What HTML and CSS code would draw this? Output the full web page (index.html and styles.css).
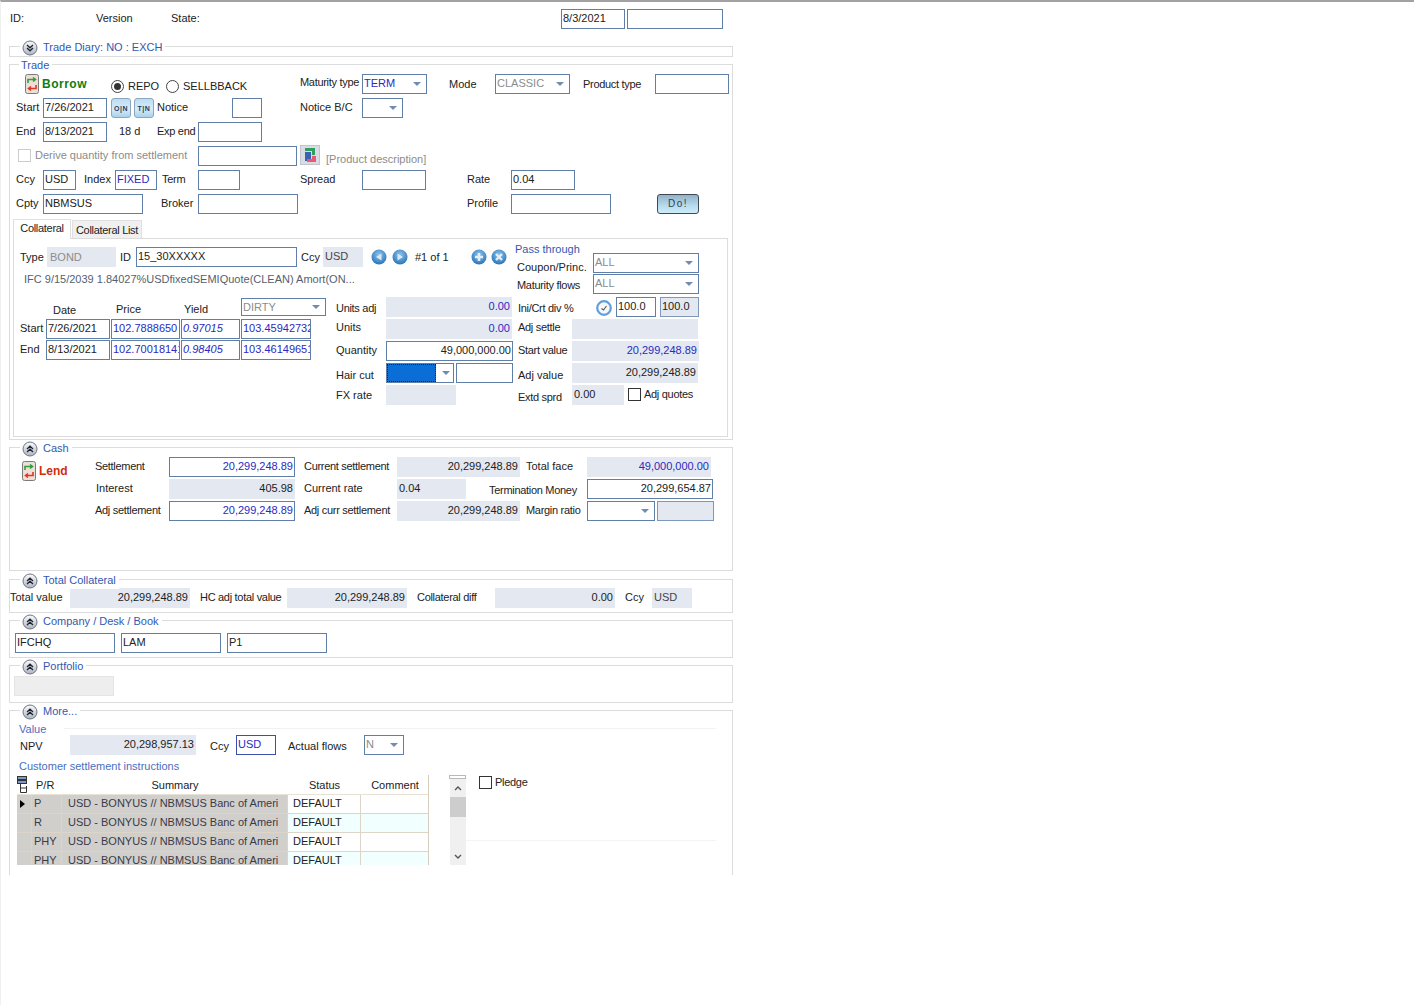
FILE: index.html
```html
<!DOCTYPE html>
<html lang="en">
<head>
    <meta charset="UTF-8">
    <title>Repo Trade</title>
    <link rel="stylesheet" href="styles.css">
</head>
<body>
    <svg class="defs" aria-hidden="true">
        <defs>
            <linearGradient id="chevFill" x1="0" y1="0" x2="0" y2="1">
                <stop offset="0" stop-color="#fbfbfd"/>
                <stop offset="1" stop-color="#aeb4c0"/>
            </linearGradient>
            <radialGradient id="navFill" cx="50%" cy="35%" r="70%">
                <stop offset="0" stop-color="#8fc4ea"/>
                <stop offset="1" stop-color="#1f6fb6"/>
            </radialGradient>
            <symbol id="chevUp" viewBox="0 0 16 16">
                <circle cx="8" cy="8" r="7" fill="url(#chevFill)" stroke="#6d7684"/>
                <path d="M5 8 8 5.2 11 8M5 11 8 8.2 11 11" fill="none" stroke="#1f2430" stroke-width="1.3"/>
            </symbol>
            <symbol id="chevDown" viewBox="0 0 16 16">
                <circle cx="8" cy="8" r="7" fill="url(#chevFill)" stroke="#6d7684"/>
                <path d="M5 5 8 7.8 11 5M5 8 8 10.8 11 8" fill="none" stroke="#1f2430" stroke-width="1.3"/>
            </symbol>
            <symbol id="swap" viewBox="0 0 14 20">
                <rect x=".5" y=".5" width="13" height="19" rx="2" fill="#e3e1dc" stroke="#7b7b7b"/>
                <rect x="2" y="2" width="10" height="16" rx="1" fill="#f4dcd6"/>
                <path d="M3 9V5.5H10M8 3.5 10.5 5.5 8 7.5" fill="none" stroke="#2f9e3f" stroke-width="1.6"/>
                <path d="M11 11V14.5H4M6 12.5 3.5 14.5 6 16.5" fill="none" stroke="#d93a22" stroke-width="1.6"/>
            </symbol>
            <symbol id="navPrev" viewBox="0 0 16 16">
                <circle cx="8" cy="8" r="7.5" fill="url(#navFill)"/>
                <path d="M10.5 4.5V11.5L5 8Z" fill="#dbe7f2"/>
            </symbol>
            <symbol id="navNext" viewBox="0 0 16 16">
                <circle cx="8" cy="8" r="7.5" fill="url(#navFill)"/>
                <path d="M5.5 4.5V11.5L11 8Z" fill="#dbe7f2"/>
            </symbol>
            <symbol id="navAdd" viewBox="0 0 16 16">
                <circle cx="8" cy="8" r="7.5" fill="url(#navFill)"/>
                <path d="M8 4V12M4 8H12" stroke="#e6eef6" stroke-width="2.6"/>
            </symbol>
            <symbol id="navDel" viewBox="0 0 16 16">
                <circle cx="8" cy="8" r="7.5" fill="url(#navFill)"/>
                <path d="M5 5 11 11M11 5 5 11" stroke="#e6eef6" stroke-width="2.4"/>
            </symbol>
            <symbol id="clock" viewBox="0 0 16 16">
                <circle cx="8" cy="8" r="6.8" fill="#f6f8fb" stroke="#5f9fdc" stroke-width="2.2"/>
                <path d="M5.5 8.5 7.5 10 10.5 6" fill="none" stroke="#555" stroke-width="1.1"/>
            </symbol>
            <symbol id="product" viewBox="0 0 20 20">
                <rect x=".5" y=".5" width="19" height="19" fill="#d9dce3" stroke="#c2c5cc"/>
                <path d="M5 3H15V10H12V6H5Z" fill="#2f9e5f"/>
                <rect x="5" y="7" width="6" height="9" fill="#3a62b0"/>
                <path d="M12 11H16V17H7V14H12Z" fill="#ec5a72"/>
            </symbol>
            <symbol id="columns" viewBox="0 0 10 17">
                <rect x=".5" y=".5" width="9" height="3" fill="#7d9bc8" stroke="#333"/>
                <rect x=".5" y="4.5" width="9" height="3" fill="#7d9bc8" stroke="#333"/>
                <path d="M3.5 8V16.5H9.5M3.5 12H9.5M9.5 10V16.5" fill="none" stroke="#333"/>
            </symbol>
        </defs>
    </svg>

    <div class="page">
        <div class="row r-head">
            <span class="lbl ml1 w86">ID:</span>
            <span class="lbl w75">Version</span>
            <span class="lbl w390">State:</span>
            <span class="box w64">8/3/2021</span>
            <span class="box ml2 w96"></span>
        </div>

        <section class="frame f-diary">
            <div class="legend"><svg class="chev"><use href="#chevDown"/></svg><span>Trade Diary: NO : EXCH</span></div>
        </section>

        <section class="frame f-trade">
            <div class="legend legend-plain"><span>Trade</span></div>
            <div class="row">
                <svg class="swap ml15"><use href="#swap"/></svg>
                <span class="lbl ml3 w69 mt1 borrow">Borrow</span>
                <span class="radio on mt6"></span>
                <span class="lbl ml4 w38 mt3">REPO</span>
                <span class="radio mt6"></span>
                <span class="lbl ml4 w117 mt3">SELLBBACK</span>
                <span class="lbl tight w62 mtn1">Maturity type</span>
                <span class="box sel w65 blue">TERM</span>
                <span class="lbl ml22 w46 mt1">Mode</span>
                <span class="box sel w75 muted">CLASSIC</span>
                <span class="lbl tight ml13 w72 mt1">Product type</span>
                <span class="box w74"></span>
            </div>
            <div class="row">
                <span class="lbl ml6 w27">Start</span>
                <span class="box w64">7/26/2021</span>
                <span class="tbtn ml4">O|N</span>
                <span class="tbtn ml3">T|N</span>
                <span class="lbl ml3 w75">Notice</span>
                <span class="box w30"></span>
                <span class="lbl ml38 w62">Notice B/C</span>
                <span class="box sel w41"></span>
            </div>
            <div class="row">
                <span class="lbl ml6 w27">End</span>
                <span class="box w64">8/13/2021</span>
                <span class="lbl ml12 w38">18 d</span>
                <span class="lbl tight w41">Exp end</span>
                <span class="box w64"></span>
            </div>
            <div class="row">
                <span class="check off ml8 mt3"></span>
                <span class="lbl muted ml4 w163">Derive quantity from settlement</span>
                <span class="box w99"></span>
                <svg class="prod ml3 mtn1"><use href="#product"/></svg>
                <span class="lbl muted ml6 mt4">[Product description]</span>
            </div>
            <div class="row">
                <span class="lbl ml6 w27">Ccy</span>
                <span class="box w33">USD</span>
                <span class="lbl ml8 w31">Index</span>
                <span class="box w42 blue">FIXED</span>
                <span class="lbl tight ml5 w36">Term</span>
                <span class="box w42"></span>
                <span class="lbl ml60 w62">Spread</span>
                <span class="box w64"></span>
                <span class="lbl ml41 w44">Rate</span>
                <span class="box w64">0.04</span>
            </div>
            <div class="row">
                <span class="lbl ml6 w27">Cpty</span>
                <span class="box w100">NBMSUS</span>
                <span class="lbl ml18 w37">Broker</span>
                <span class="box w100"></span>
                <span class="lbl ml169 w44">Profile</span>
                <span class="box w100"></span>
                <span class="do-btn ml46">Do!</span>
            </div>

            <div class="tabs">
                <span class="tab tab-on">Collateral</span>
                <span class="tab">Collateral List</span>
            </div>
            <div class="panel">
                <div class="panel-top">
                    <div class="panel-main">
                        <div class="row r22">
                            <span class="lbl ml6 w27 mt1">Type</span>
                            <span class="box ro box-low w69 muted">BOND</span>
                            <span class="lbl ml4 w16 mt1">ID</span>
                            <span class="box w161">15_30XXXXX</span>
                            <span class="lbl ml4 w22 mt1">Ccy</span>
                            <span class="box ro w40 dim">USD</span>
                            <svg class="nav ml8 mt2"><use href="#navPrev"/></svg>
                            <svg class="nav ml5 mt2"><use href="#navNext"/></svg>
                            <span class="lbl ml7 w56 mt1">#1 of 1</span>
                            <svg class="nav mt2"><use href="#navAdd"/></svg>
                            <svg class="nav ml4 mt2"><use href="#navDel"/></svg>
                        </div>
                        <div class="desc">IFC 9/15/2039 1.84027%USDfixedSEMIQuote(CLEAN) Amort(ON...</div>
                    </div>
                    <div class="pass">
                        <div class="pass-title">Pass through</div>
                        <div class="row r21">
                            <span class="lbl ml2 w76 mt5">Coupon/Princ.</span>
                            <span class="box sel w106 muted">ALL</span>
                        </div>
                        <div class="row r21">
                            <span class="lbl tight ml2 w76 mt2">Maturity flows</span>
                            <span class="box sel w106 muted">ALL</span>
                        </div>
                    </div>
                </div>
                <div class="panel-bottom">
                    <div class="quotes">
                        <div class="row r-quote-head">
                            <span class="lbl ml39 w63 mt3">Date</span>
                            <span class="lbl w68 mt2">Price</span>
                            <span class="lbl w57 mt2">Yield</span>
                            <span class="box sel w85 h18 muted">DIRTY</span>
                        </div>
                        <div class="row r21">
                            <span class="lbl ml6 w26">Start</span>
                            <span class="box w64">7/26/2021</span>
                            <span class="box ml1 w69 blue">102.7888650</span>
                            <span class="box ml1 w59 blue ital">0.97015</span>
                            <span class="box ml1 w70 blue">103.45942732</span>
                        </div>
                        <div class="row r21">
                            <span class="lbl ml6 w26">End</span>
                            <span class="box w64">8/13/2021</span>
                            <span class="box ml1 w69 blue">102.70018141</span>
                            <span class="box ml1 w59 blue ital">0.98405</span>
                            <span class="box ml1 w70 blue">103.46149651</span>
                        </div>
                    </div>
                    <div class="col-mid">
                        <div class="row r22">
                            <span class="lbl tight w50 mt2">Units adj</span>
                            <span class="box ro num w126 blue">0.00</span>
                        </div>
                        <div class="row r22">
                            <span class="lbl w50 mtn1">Units</span>
                            <span class="box ro num w126 blue">0.00</span>
                        </div>
                        <div class="row r22">
                            <span class="lbl w50">Quantity</span>
                            <span class="box num w127">49,000,000.00</span>
                        </div>
                        <div class="row r22">
                            <span class="lbl w50 mt3">Hair cut</span>
                            <span class="box sel sel-focus w68"><span class="focus-fill"></span></span>
                            <span class="box ml2 w57"></span>
                        </div>
                        <div class="row r22">
                            <span class="lbl w50 mt1">FX rate</span>
                            <span class="box ro w70"></span>
                        </div>
                    </div>
                    <div class="col-right">
                        <div class="row r22">
                            <span class="lbl tight w78 mt2">Ini/Crt div %</span>
                            <svg class="nav mt3"><use href="#clock"/></svg>
                            <span class="box ml4 w40">100.0</span>
                            <span class="box ro ro-line ml4 w39">100.0</span>
                        </div>
                        <div class="row r22">
                            <span class="lbl tight w54 mtn1">Adj settle</span>
                            <span class="box ro w126"></span>
                        </div>
                        <div class="row r22">
                            <span class="lbl tight w54">Start value</span>
                            <span class="box ro num w127 blue">20,299,248.89</span>
                        </div>
                        <div class="row r22">
                            <span class="lbl w54 mt3">Adj value</span>
                            <span class="box ro num w126">20,299,248.89</span>
                        </div>
                        <div class="row r22">
                            <span class="lbl tight w54 mt3">Extd sprd</span>
                            <span class="box ro w52">0.00</span>
                            <span class="check ml4 mt3"></span>
                            <span class="lbl tight ml3">Adj quotes</span>
                        </div>
                    </div>
                </div>
            </div>
        </section>

        <section class="frame f-cash">
            <div class="legend"><svg class="chev"><use href="#chevUp"/></svg><span>Cash</span></div>
            <div class="row r22">
                <svg class="swap ml12 mt4"><use href="#swap"/></svg>
                <span class="lbl ml3 w56 mt5 lend">Lend</span>
                <span class="lbl tight w74">Settlement</span>
                <span class="box num w126 blue">20,299,248.89</span>
                <span class="lbl tight ml9 w93">Current settlement</span>
                <span class="box ro num w123">20,299,248.89</span>
                <span class="lbl ml6 w61">Total face</span>
                <span class="box ro num w124 blue">49,000,000.00</span>
            </div>
            <div class="row r22">
                <span class="lbl ml86 w73">Interest</span>
                <span class="box ro num w126">405.98</span>
                <span class="lbl ml9 w93">Current rate</span>
                <span class="box ro w69">0.04</span>
                <span class="lbl tight ml23 w98 mt2">Termination Money</span>
                <span class="box num w126">20,299,654.87</span>
            </div>
            <div class="row r22">
                <span class="lbl tight ml85 w74">Adj settlement</span>
                <span class="box num w126 blue">20,299,248.89</span>
                <span class="lbl tight ml9 w93">Adj curr settlement</span>
                <span class="box ro num w123">20,299,248.89</span>
                <span class="lbl tight ml6 w61">Margin ratio</span>
                <span class="box sel w68"></span>
                <span class="box ro ro-line ml2 w57"></span>
            </div>
        </section>

        <section class="frame f-total">
            <div class="legend"><svg class="chev"><use href="#chevUp"/></svg><span>Total Collateral</span></div>
            <div class="row">
                <span class="lbl w60">Total value</span>
                <span class="box ro num w120">20,299,248.89</span>
                <span class="lbl tight ml10 w87">HC adj total value</span>
                <span class="box ro num w120">20,299,248.89</span>
                <span class="lbl tight ml10 w78">Collateral diff</span>
                <span class="box ro num w120">0.00</span>
                <span class="lbl ml10 w27">Ccy</span>
                <span class="box ro w40 dim">USD</span>
            </div>
        </section>

        <section class="frame f-company">
            <div class="legend"><svg class="chev"><use href="#chevUp"/></svg><span>Company / Desk / Book</span></div>
            <div class="row">
                <span class="box ml5 w100">IFCHQ</span>
                <span class="box ml6 w100">LAM</span>
                <span class="box ml6 w100">P1</span>
            </div>
        </section>

        <section class="frame f-portfolio">
            <div class="legend"><svg class="chev"><use href="#chevUp"/></svg><span>Portfolio</span></div>
            <div class="row">
                <span class="box box-off ml4 w100"></span>
            </div>
        </section>

        <section class="frame f-more">
            <div class="legend"><svg class="chev"><use href="#chevUp"/></svg><span>More...</span></div>
            <div class="sub-head">
                <span class="sub-title">Value</span>
                <span class="sub-line"></span>
            </div>
            <div class="row r25">
                <span class="lbl ml10 w50 mt2">NPV</span>
                <span class="box ro num w126">20,298,957.13</span>
                <span class="lbl ml14 w26 mt2">Ccy</span>
                <span class="box box-blue w40 blue">USD</span>
                <span class="lbl ml12 w76 mt2">Actual flows</span>
                <span class="box sel w40 muted">N</span>
            </div>
            <div class="csi-title">Customer settlement instructions</div>
            <div class="csi">
                <div class="grid">
                    <span class="gh gh-icon"><svg class="col-icon"><use href="#columns"/></svg></span>
                    <span class="gh gh-pr">P/R</span>
                    <span class="gh">Summary</span>
                    <span class="gh">Status</span>
                    <span class="gh">Comment</span>

                    <span class="gc gc-lock cur"></span>
                    <span class="gc gc-lock">P</span>
                    <span class="gc gc-lock gc-sum">USD - BONYUS // NBMSUS Banc of Ameri</span>
                    <span class="gc gc-st">DEFAULT</span>
                    <span class="gc"></span>

                    <span class="gc gc-lock"></span>
                    <span class="gc gc-lock">R</span>
                    <span class="gc gc-lock gc-sum">USD - BONYUS // NBMSUS Banc of Ameri</span>
                    <span class="gc gc-st alt">DEFAULT</span>
                    <span class="gc alt"></span>

                    <span class="gc gc-lock"></span>
                    <span class="gc gc-lock">PHY</span>
                    <span class="gc gc-lock gc-sum">USD - BONYUS // NBMSUS Banc of Ameri</span>
                    <span class="gc gc-st">DEFAULT</span>
                    <span class="gc"></span>

                    <span class="gc gc-lock"></span>
                    <span class="gc gc-lock">PHY</span>
                    <span class="gc gc-lock gc-sum">USD - BONYUS // NBMSUS Banc of Ameri</span>
                    <span class="gc gc-st alt">DEFAULT</span>
                    <span class="gc alt"></span>
                </div>
                <div class="scroll">
                    <span class="scroll-cap"></span>
                    <span class="scroll-btn">
                        <svg class="scroll-arrow" viewBox="0 0 8 5"><path d="M1 4 4 1 7 4" fill="none" stroke="#555" stroke-width="1.4"/></svg>
                    </span>
                    <span class="scroll-thumb"></span>
                    <span class="scroll-rest"></span>
                    <span class="scroll-btn">
                        <svg class="scroll-arrow" viewBox="0 0 8 5"><path d="M1 1 4 4 7 1" fill="none" stroke="#555" stroke-width="1.4"/></svg>
                    </span>
                </div>
                <div class="pledge">
                    <div class="pledge-row">
                        <span class="check"></span>
                        <span class="lbl tight pledge-lbl ml3">Pledge</span>
                    </div>
                    <div class="faint"></div>
                </div>
            </div>
        </section>
    </div>
</body>
</html>
```

FILE: styles.css
```css
* {
    box-sizing: border-box;
}

body {
    margin: 0;
    background-color: #ffffff;
    color: #222222;
    font-family: "Liberation Sans", Arial, sans-serif;
    font-size: 11px;
}

.defs {
    position: absolute;
    width: 0;
    height: 0;
}

.page {
    height: 1005px;
    padding-left: 8px;
    border-top: 2px solid #a2a2a2;
    border-left: 1px solid #f0f0f0;
    overflow: hidden;
}

/* rows and labels */
.row {
    display: flex;
    align-items: flex-start;
    height: 24px;
}

.r21 { height: 21px; }
.r22 { height: 22px; }
.r25 { height: 25px; }
.r-head { height: 20px; margin-top: 7px; }
.r-quote-head { height: 21px; margin-top: 1px; }

.lbl {
    flex: none;
    line-height: 19px;
    white-space: nowrap;
}

.tight {
    letter-spacing: -0.3px;
}

/* boxes */
.box {
    flex: none;
    display: block;
    height: 20px;
    padding: 0 2px 0 1px;
    border: 1px solid #5f7fa8;
    background-color: #ffffff;
    line-height: 16px;
    white-space: nowrap;
    overflow: hidden;
}

.ro {
    border-color: transparent;
    background-color: #e4e8f1;
}

.ro-line {
    border-color: #7d98ba;
}

.box-low {
    padding-left: 2px;
    line-height: 18px;
}

.box-off {
    border-color: #e4e4e4;
    background-color: #eeeeee;
}

.box-blue {
    border-color: #3c4fb0;
}

.num { text-align: right; padding-right: 1px; }
.blue { color: #2a2ac2; }
.muted { color: #8c8c8c; }
.dim { color: #444444; }
.ital { font-style: italic; }
.h18 { height: 18px; }

.sel {
    display: flex;
    justify-content: space-between;
}

.sel::after {
    content: "";
    flex: none;
    align-self: center;
    margin: 0 3px 0 auto;
    border-left: 4px solid transparent;
    border-right: 4px solid transparent;
    border-top: 4px solid #6f8db2;
}

.sel-focus {
    padding: 0;
}

.focus-fill {
    flex: none;
    width: 49px;
    height: 18px;
    background-color: #0a6ed6;
    border: 1px dotted #10243c;
}

.borrow {
    color: #0a7d14;
    font-size: 12px;
    font-weight: bold;
    letter-spacing: 0.5px;
}

.lend {
    color: #cf2f10;
    font-size: 12px;
    font-weight: bold;
}

.swap {
    flex: none;
    width: 14px;
    height: 20px;
}

.prod {
    flex: none;
    width: 20px;
    height: 20px;
}

.nav {
    flex: none;
    width: 16px;
    height: 16px;
}

.radio {
    flex: none;
    position: relative;
    width: 13px;
    height: 13px;
    border: 1px solid #444444;
    border-radius: 50%;
}

.radio.on::after {
    content: "";
    position: absolute;
    left: 2px;
    top: 2px;
    width: 7px;
    height: 7px;
    border-radius: 50%;
    background-color: #333333;
}

.check {
    flex: none;
    display: block;
    width: 13px;
    height: 13px;
    border: 1px solid #333333;
    background-color: #ffffff;
}

.check.off {
    border-color: #cccccc;
}

.tbtn {
    flex: none;
    width: 20px;
    height: 20px;
    border: 1px solid #8aa6c0;
    border-radius: 3px;
    background: linear-gradient(#bcdcf2, #d6ecfa 55%, #a9d2ee);
    color: #1f3a5c;
    font-size: 7px;
    font-weight: bold;
    line-height: 19px;
    letter-spacing: 0.5px;
    text-align: center;
}

.do-btn {
    flex: none;
    width: 42px;
    height: 20px;
    border: 1px solid #3f4a55;
    border-radius: 3px;
    background: linear-gradient(#93b2c8, #b7dcee 60%, #cdeefa);
    color: #2f3f4f;
    font-size: 10px;
    line-height: 18px;
    letter-spacing: 1.5px;
    text-align: center;
}

/* group boxes */
.frame {
    position: relative;
    width: 724px;
    margin-top: 7px;
    border: 1px solid #dcdcdc;
}

.f-diary { height: 11px; margin-top: 17px; }
.f-trade { height: 376px; padding-top: 9px; }
.f-cash { height: 124px; padding-top: 9px; }
.f-total { height: 34px; margin-top: 8px; padding-top: 8px; }
.f-company { height: 38px; padding-top: 12px; }
.f-portfolio { height: 38px; padding-top: 10px; }
.f-more { height: 165px; border-bottom: none; }

.legend {
    position: absolute;
    left: 10px;
    top: -7px;
    display: flex;
    gap: 5px;
    padding: 0 3px 0 2px;
    background-color: #ffffff;
    color: #3458b0;
    line-height: 15px;
}

.legend-plain {
    left: 9px;
}

.chev {
    flex: none;
    width: 16px;
    height: 16px;
}

/* collateral tabs */
.tabs {
    display: flex;
    align-items: flex-end;
    height: 19px;
    margin-top: 1px;
    margin-left: 3px;
}

.tab {
    width: 70px;
    height: 18px;
    margin-left: 1px;
    border: 1px solid #e0e0e0;
    border-bottom: none;
    background-color: #f0f0f0;
    line-height: 18px;
    letter-spacing: -0.3px;
    text-align: center;
}

.tab-on {
    position: relative;
    z-index: 1;
    width: 58px;
    height: 20px;
    margin-left: 0;
    margin-bottom: -1px;
    background-color: #ffffff;
    line-height: 17px;
}

.panel {
    width: 715px;
    height: 199px;
    margin-left: 3px;
    padding-top: 8px;
    border: 1px solid #dcdcdc;
}

.panel-top {
    display: flex;
    height: 50px;
}

.panel-main {
    flex: none;
    width: 501px;
}

.desc {
    margin-top: 2px;
    margin-left: 10px;
    color: #555f70;
    line-height: 16px;
}

.pass {
    margin-top: -4px;
}

.pass-title {
    height: 10px;
    color: #3458b0;
    line-height: 13px;
}

.panel-bottom {
    display: flex;
}

.quotes {
    flex: none;
    width: 322px;
}

.col-mid {
    flex: none;
    width: 182px;
}

/* more */
.sub-head {
    display: flex;
    align-items: center;
    height: 13px;
    margin-top: 11px;
    margin-right: 16px;
}

.sub-title {
    width: 45px;
    margin-left: 9px;
    color: #4a6ec0;
}

.sub-line {
    flex: 1;
    height: 1px;
    background-color: #f2f2f2;
}

.csi-title {
    margin-top: 0;
    margin-left: 9px;
    color: #4a6ec0;
    line-height: 13px;
}

.csi {
    display: flex;
    align-items: flex-start;
    height: 90px;
    margin-top: 2px;
}

.grid {
    flex: none;
    display: grid;
    grid-template-columns: 15px 30px 226px 73px 68px;
    grid-template-rows: 20px repeat(4, 19px);
    width: 412px;
    height: 90px;
    margin-left: 7px;
    border-right: 1px solid #d6cfc0;
    overflow: hidden;
}

.gh {
    line-height: 20px;
    text-align: center;
    border-bottom: 1px solid #e8e2d6;
}

.gh-icon {
    display: flex;
    align-items: flex-start;
    padding-top: 1px;
}

.col-icon {
    width: 10px;
    height: 17px;
}

.gh-pr {
    padding-left: 4px;
    text-align: left;
}

.gc {
    position: relative;
    padding-left: 2px;
    border-bottom: 1px solid #ddd6c8;
    line-height: 16px;
    white-space: nowrap;
    overflow: hidden;
}

.gc-lock {
    background-color: #d1cfcb;
    border-right: 1px solid #dcd4c6;
    color: #3a3a48;
}

.gc-sum {
    padding-left: 6px;
}

.gc-st {
    padding-left: 5px;
    border-right: 1px solid #ddd6c8;
}

.alt {
    background-color: #f1ffff;
}

.cur::after {
    content: "";
    position: absolute;
    left: 3px;
    top: 5px;
    border-top: 4px solid transparent;
    border-bottom: 4px solid transparent;
    border-left: 5px solid #000000;
}

.scroll {
    flex: none;
    display: flex;
    flex-direction: column;
    width: 17px;
    height: 90px;
    margin-left: 20px;
}

.scroll-cap {
    height: 4px;
    border: 1px solid #b9b9b9;
}

.scroll-btn {
    display: flex;
    align-items: center;
    justify-content: center;
    height: 18px;
    margin-left: 1px;
    background-color: #f0f0f0;
}

.scroll-arrow {
    width: 8px;
    height: 5px;
}

.scroll-thumb {
    height: 20px;
    margin-left: 1px;
    background-color: #cdcdcd;
}

.scroll-rest {
    flex: 1;
    margin-left: 1px;
    background-color: #f0f0f0;
}

.pledge {
    flex: none;
    width: 250px;
}

.pledge-row {
    display: flex;
    height: 65px;
    padding-top: 1px;
    padding-left: 13px;
}

.pledge-lbl {
    line-height: 13px;
}

.faint {
    height: 1px;
    background-color: #f4f4f4;
}

/* sizes */
.w16 { width: 16px; }
.w22 { width: 22px; }
.w26 { width: 26px; }
.w27 { width: 27px; }
.w30 { width: 30px; }
.w31 { width: 31px; }
.w33 { width: 33px; }
.w36 { width: 36px; }
.w37 { width: 37px; }
.w38 { width: 38px; }
.w39 { width: 39px; }
.w40 { width: 40px; }
.w41 { width: 41px; }
.w42 { width: 42px; }
.w44 { width: 44px; }
.w46 { width: 46px; }
.w50 { width: 50px; }
.w52 { width: 52px; }
.w54 { width: 54px; }
.w56 { width: 56px; }
.w57 { width: 57px; }
.w59 { width: 59px; }
.w60 { width: 60px; }
.w61 { width: 61px; }
.w62 { width: 62px; }
.w63 { width: 63px; }
.w64 { width: 64px; }
.w65 { width: 65px; }
.w68 { width: 68px; }
.w69 { width: 69px; }
.w70 { width: 70px; }
.w72 { width: 72px; }
.w73 { width: 73px; }
.w74 { width: 74px; }
.w75 { width: 75px; }
.w76 { width: 76px; }
.w78 { width: 78px; }
.w85 { width: 85px; }
.w86 { width: 86px; }
.w87 { width: 87px; }
.w93 { width: 93px; }
.w96 { width: 96px; }
.w98 { width: 98px; }
.w99 { width: 99px; }
.w100 { width: 100px; }
.w106 { width: 106px; }
.w117 { width: 117px; }
.w120 { width: 120px; }
.w123 { width: 123px; }
.w124 { width: 124px; }
.w126 { width: 126px; }
.w127 { width: 127px; }
.w161 { width: 161px; }
.w163 { width: 163px; }
.w390 { width: 390px; }

.ml1 { margin-left: 1px; }
.ml2 { margin-left: 2px; }
.ml3 { margin-left: 3px; }
.ml4 { margin-left: 4px; }
.ml5 { margin-left: 5px; }
.ml6 { margin-left: 6px; }
.ml7 { margin-left: 7px; }
.ml8 { margin-left: 8px; }
.ml9 { margin-left: 9px; }
.ml10 { margin-left: 10px; }
.ml12 { margin-left: 12px; }
.ml13 { margin-left: 13px; }
.ml14 { margin-left: 14px; }
.ml15 { margin-left: 15px; }
.ml18 { margin-left: 18px; }
.ml22 { margin-left: 22px; }
.ml23 { margin-left: 23px; }
.ml38 { margin-left: 38px; }
.ml39 { margin-left: 39px; }
.ml41 { margin-left: 41px; }
.ml46 { margin-left: 46px; }
.ml60 { margin-left: 60px; }
.ml85 { margin-left: 85px; }
.ml86 { margin-left: 86px; }
.ml169 { margin-left: 169px; }

.mt1 { margin-top: 1px; }
.mt2 { margin-top: 2px; }
.mt3 { margin-top: 3px; }
.mt4 { margin-top: 4px; }
.mt5 { margin-top: 5px; }
.mt6 { margin-top: 6px; }
.mtn1 { margin-top: -1px; }
```
